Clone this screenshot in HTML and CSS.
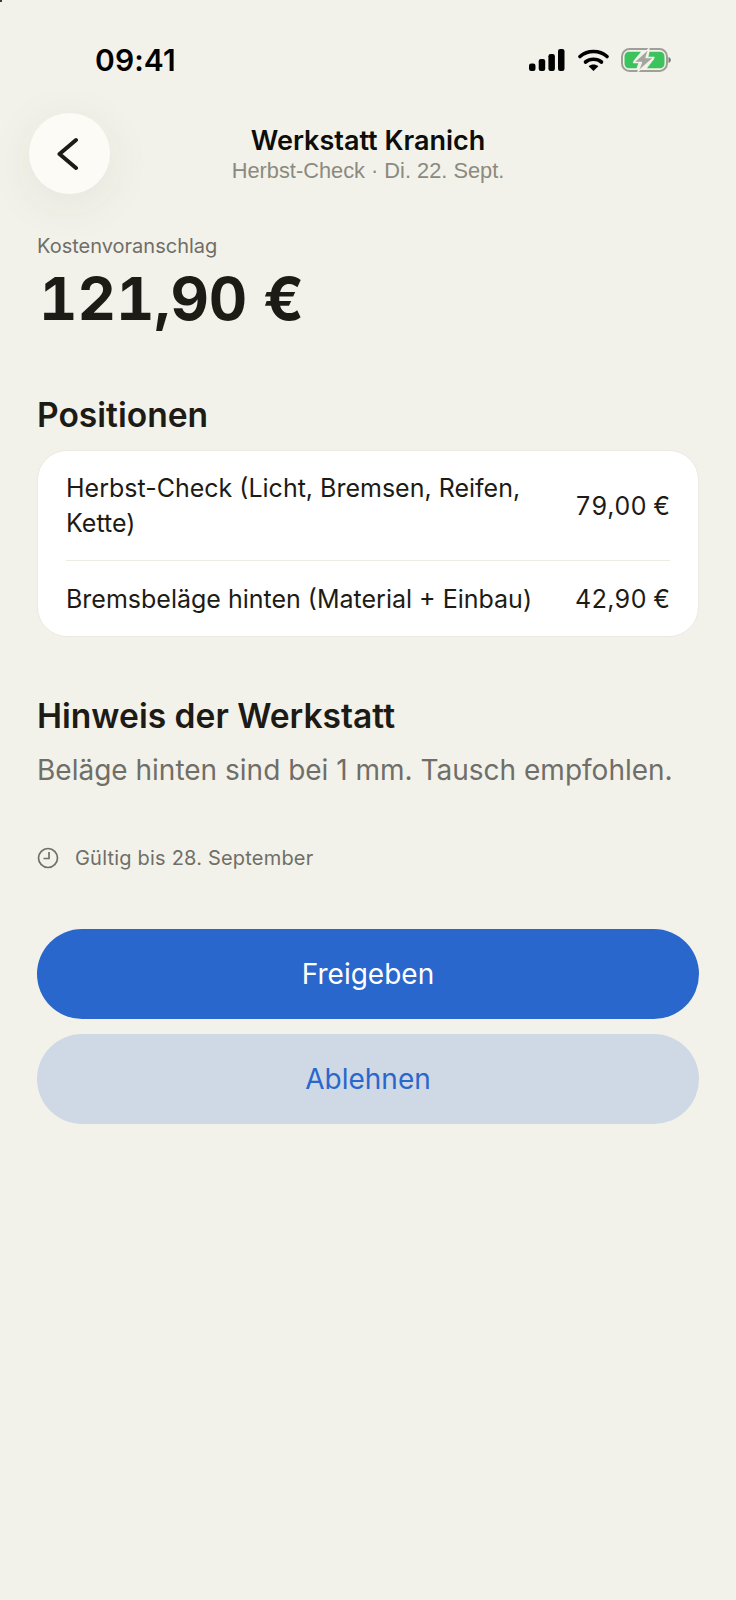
FILE: index.html
```html
<!DOCTYPE html>
<html lang="de">
<head>
<meta charset="utf-8">
<title>Kostenvoranschlag</title>
<link rel="stylesheet" href="styles.css">
</head>
<body>
<div class="corner-mark"></div>
<div class="status">
  <span class="time">09:41</span>
  <div class="status-icons">
    <svg class="sig" width="36" height="22" viewBox="0 0 36 22"><rect x="0" y="14.5" width="6.500" height="7.500" rx="2.200" fill="#000"/><rect x="9.700" y="10" width="6.500" height="12" rx="2.200" fill="#000"/><rect x="19.400" y="5" width="6.500" height="17" rx="2.200" fill="#000"/><rect x="29" y="0" width="6.500" height="22" rx="2.200" fill="#000"/></svg>
    <svg class="wifi" width="31" height="22" viewBox="0 0 31 22"><path d="M2 7.500C9.500 .8 21.500 .8 29 7.500" fill="none" stroke="#000" stroke-width="3.600" stroke-linecap="round"/><path d="M7.500 13C12 9.300 19 9.300 23.500 13" fill="none" stroke="#000" stroke-width="3.600" stroke-linecap="round"/><path d="M15.500 22L10.600 17.200C13.400 15 17.600 15 20.400 17.200Z" fill="#000"/></svg>
    <svg class="batt" width="50" height="24" viewBox="0 0 50 24"><rect x="1" y="1" width="45" height="22" rx="7.500" fill="none" stroke="#9f9f99" stroke-width="2"/><path d="M47.500 9c1.500.5 2.300 1.600 2.300 3s-.8 2.500-2.300 3Z" fill="#77776f"/><path d="M8 3.800H20L12 13.500H18L15.500 20.200H8A4.500 4.500 0 0 1 3.500 15.700V8.300A4.500 4.500 0 0 1 8 3.800Z" fill="#3cc35e"/><path d="M28.500 3.800H39A4.500 4.500 0 0 1 43.500 8.300V15.700A4.500 4.500 0 0 1 39 20.200H26L33.500 10.500H27Z" fill="#3cc35e"/><path d="M28 .5L12.500 14.500H20.500L17 23.500L33 9.500H25Z" fill="#a5a59e" stroke="#f3f2ea" stroke-width="1.300" stroke-linejoin="round"/></svg>
  </div>
</div>
<header class="nav">
  <button class="back" aria-label="Zurück">
    <svg width="26" height="36" viewBox="0 0 26 36"><path d="M19 4L2.500 18 19 32" fill="none" stroke="#1d1b15" stroke-width="4" stroke-linecap="round" stroke-linejoin="round"/></svg>
  </button>
  <div class="nav-title">
    <div class="title">Werkstatt Kranich</div>
    <div class="sub">Herbst-Check · Di. 22. Sept.</div>
  </div>
</header>
<main class="content">
  <div class="label">Kostenvoranschlag</div>
  <div class="amount">121,90 €</div>
  <h2 class="h-pos">Positionen</h2>
  <section class="card">
    <div class="row row-first">
      <span class="item">Herbst-Check (Licht, Bremsen, Reifen, Kette)</span>
      <span class="price">79,00 €</span>
    </div>
    <div class="row row-last">
      <span class="item">Bremsbeläge hinten (Material + Einbau)</span>
      <span class="price">42,90 €</span>
    </div>
  </section>
  <h2 class="h-note">Hinweis der Werkstatt</h2>
  <p class="note">Beläge hinten sind bei 1 mm. Tausch empfohlen.</p>
  <div class="valid">
    <svg width="22" height="22" viewBox="0 0 22 22"><circle cx="11" cy="11" r="9.500" fill="none" stroke="#6f6e68" stroke-width="1.700"/><path d="M12 5v6.500H6.500" fill="none" stroke="#6f6e68" stroke-width="1.700"/></svg>
    <span>Gültig bis 28. September</span>
  </div>
  <button class="btn primary">Freigeben</button>
  <button class="btn secondary">Ablehnen</button>
</main>
</body>
</html>
```
FILE: styles.css
```css
* { box-sizing: border-box; }
html, body { margin: 0; padding: 0; }
body {
  width: 736px;
  height: 1600px;
  overflow: hidden;
  background: #f3f2ea;
  font-family: Inter, "Liberation Sans", sans-serif;
  color: #1d1b15;
}
.corner-mark {
  position: absolute;
  left: 0;
  top: 0;
  width: 2px;
  height: 2px;
  background: #3a3a36;
}
.status {
  display: flex;
  justify-content: space-between;
  align-items: center;
  height: 36px;
  margin-top: 42px;
  padding: 0 65px 0 95px;
}
.time { font-size: 30px; font-weight: 600; color: #000; letter-spacing: 0.1px; }
.status-icons { display: flex; align-items: center; gap: 12px; }
.sig { margin-right: 1px; }
.nav {
  position: relative;
  height: 81px;
  margin-top: 35px;
  display: flex;
  justify-content: center;
}
.back {
  position: absolute;
  left: 29px;
  top: 0;
  width: 81px;
  height: 81px;
  border: 0;
  padding: 0;
  border-radius: 50%;
  background: #fdfbf5;
  box-shadow: 0 10px 50px rgba(60, 55, 40, 0.07);
  display: flex;
  align-items: center;
  justify-content: center;
}
.nav-title { text-align: center; padding-top: 12px; }
.title { font-size: 27px; line-height: 32px; font-weight: 600; color: #0d0d0b; }
.sub { font-size: 21.8px; line-height: 27px; color: #8b8a7e; font-family: "Liberation Sans", sans-serif; }
.content { padding: 0 37px; }
.label { margin-top: 40px; font-size: 20px; line-height: 24px; color: #6f6e68; }
.amount { margin-top: 5px; font-size: 59.5px; line-height: 70px; font-weight: 700; color: #1d1b15; padding-left: 2px; font-variant-numeric: tabular-nums; }
h2 { margin: 0; font-size: 33.6px; line-height: 40px; font-weight: 560; color: #1d1b15; }
.h-pos { margin-top: 62px; }
.card {
  margin-top: 15px;
  background: #fff;
  border: 1px solid #ebeae3;
  border-radius: 30px;
  padding: 0 28px;
}
.row { display: flex; align-items: center; justify-content: space-between; gap: 40px; font-size: 25px; line-height: 35px; color: #1d1b15; }
.row-first { padding: 20px 0 19px; border-bottom: 1px solid #ebeae3; }
.row-last { padding: 21px 0 19px; }
.price { white-space: nowrap; font-variant-numeric: tabular-nums; }
.h-note { margin-top: 59px; }
.note { margin: 15px 0 0; font-size: 28px; line-height: 38px; color: #6f6e68; }
.valid { display: flex; align-items: center; gap: 16px; margin-top: 55px; font-size: 20px; line-height: 28px; color: #6f6e68; letter-spacing: 0.2px; }
.btn {
  display: block;
  width: 662px;
  height: 90px;
  border: 0;
  border-radius: 45px;
  font-family: inherit;
  font-size: 28px;
}
.primary { margin-top: 57px; background: #2a67cc; color: #fff; }
.secondary { margin-top: 15px; background: #cfd9e5; color: #2a67cc; }
```
